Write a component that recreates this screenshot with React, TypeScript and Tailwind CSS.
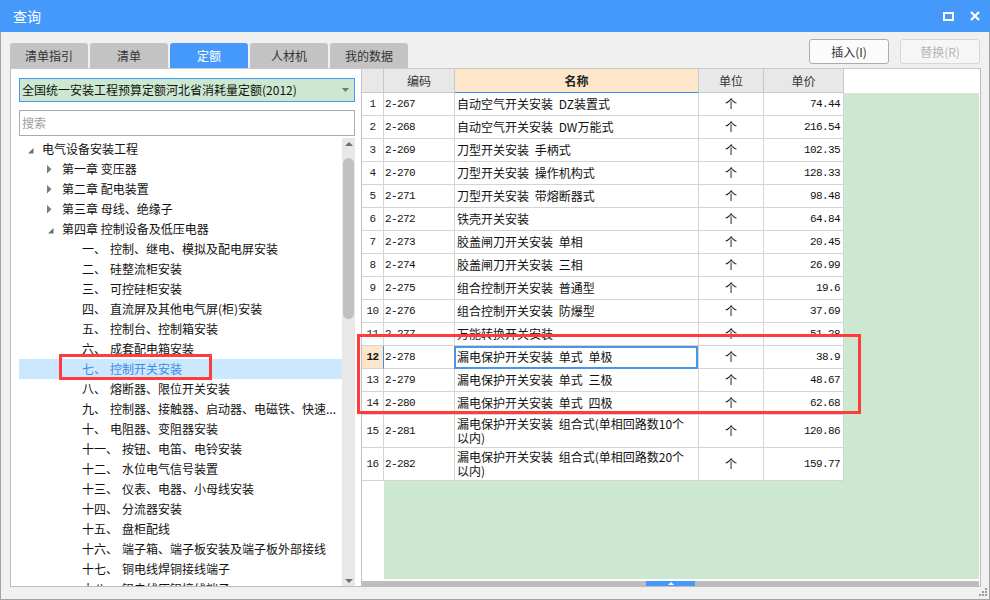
import React from "react";

type TreeRow = { level: number; arrow?: "open" | "closed"; prefix?: string; text: string; selected?: boolean };

const treeRows: TreeRow[] = [
  { level: 0, arrow: "open", text: "电气设备安装工程" },
  { level: 1, arrow: "closed", text: "第一章 变压器" },
  { level: 1, arrow: "closed", text: "第二章 配电装置" },
  { level: 1, arrow: "closed", text: "第三章 母线、绝缘子" },
  { level: 1, arrow: "open", text: "第四章 控制设备及低压电器" },
  { level: 2, prefix: "一、", text: "控制、继电、模拟及配电屏安装" },
  { level: 2, prefix: "二、", text: "硅整流柜安装" },
  { level: 2, prefix: "三、", text: "可控硅柜安装" },
  { level: 2, prefix: "四、", text: "直流屏及其他电气屏(柜)安装" },
  { level: 2, prefix: "五、", text: "控制台、控制箱安装" },
  { level: 2, prefix: "六、", text: "成套配电箱安装" },
  { level: 2, prefix: "七、", text: "控制开关安装", selected: true },
  { level: 2, prefix: "八、", text: "熔断器、限位开关安装" },
  { level: 2, prefix: "九、", text: "控制器、接触器、启动器、电磁铁、快速..." },
  { level: 2, prefix: "十、", text: "电阻器、变阻器安装" },
  { level: 2, prefix: "十一、", text: "按钮、电笛、电铃安装" },
  { level: 2, prefix: "十二、", text: "水位电气信号装置" },
  { level: 2, prefix: "十三、", text: "仪表、电器、小母线安装" },
  { level: 2, prefix: "十四、", text: "分流器安装" },
  { level: 2, prefix: "十五、", text: "盘柜配线" },
  { level: 2, prefix: "十六、", text: "端子箱、端子板安装及端子板外部接线" },
  { level: 2, prefix: "十七、", text: "铜电线焊铜接线端子" },
  { level: 2, prefix: "十八、", text: "铝电线压铝接线端子" },
];

type Row = { n: string; code: string; name: string[]; price: string };
const rows: Row[] = [
  { n: "1", code: "2-267", name: ["自动空气开关安装 DZ装置式"], price: "74.44" },
  { n: "2", code: "2-268", name: ["自动空气开关安装 DW万能式"], price: "216.54" },
  { n: "3", code: "2-269", name: ["刀型开关安装 手柄式"], price: "102.35" },
  { n: "4", code: "2-270", name: ["刀型开关安装 操作机构式"], price: "128.33" },
  { n: "5", code: "2-271", name: ["刀型开关安装 带熔断器式"], price: "98.48" },
  { n: "6", code: "2-272", name: ["铁壳开关安装"], price: "64.84" },
  { n: "7", code: "2-273", name: ["胶盖闸刀开关安装 单相"], price: "20.45" },
  { n: "8", code: "2-274", name: ["胶盖闸刀开关安装 三相"], price: "26.99" },
  { n: "9", code: "2-275", name: ["组合控制开关安装 普通型"], price: "19.6" },
  { n: "10", code: "2-276", name: ["组合控制开关安装 防爆型"], price: "37.69" },
  { n: "11", code: "2-277", name: ["万能转换开关安装"], price: "51.28" },
  { n: "12", code: "2-278", name: ["漏电保护开关安装 单式 单极"], price: "38.9" },
  { n: "13", code: "2-279", name: ["漏电保护开关安装 单式 三极"], price: "48.67" },
  { n: "14", code: "2-280", name: ["漏电保护开关安装 单式 四极"], price: "62.68" },
  { n: "15", code: "2-281", name: ["漏电保护开关安装 组合式(单相回路数10个", "以内)"], price: "120.86" },
  { n: "16", code: "2-282", name: ["漏电保护开关安装 组合式(单相回路数20个", "以内)"], price: "159.77" },
];

const mono = "font-['Liberation_Mono',monospace] text-[11px] tracking-[-0.6px]";

function Arrow({ kind }: { kind: "open" | "closed" }) {
  return (
    <div className="w-[15px] h-[20px] shrink-0">
      <svg width="15" height="20" viewBox="0 0 15 20">
        {kind === "open" ? (
          <polygon points="6.5,9 6.5,14.5 1,14.5" fill="#6f6f6f" />
        ) : (
          <polygon points="0,6 0,14.5 4.5,10.25" fill="#7a7a7a" />
        )}
      </svg>
    </div>
  );
}

function TreeLine({ r }: { r: TreeRow }) {
  const pad = r.level === 0 ? "pl-[8px]" : r.level === 1 ? "pl-[28px]" : "pl-[63px]";
  return (
    <div
      className={`h-[20px] flex items-center whitespace-nowrap overflow-hidden ${pad} ${
        r.selected ? "bg-[#cce8ff] text-[#3a8ce4]" : "text-[#111]"
      }`}
    >
      {r.arrow && <Arrow kind={r.arrow} />}
      {r.prefix && <span className="mr-[4px]">{r.prefix}</span>}
      <span className="leading-[20px]">{r.text}</span>
    </div>
  );
}

function TitleBar() {
  return (
    <div className="h-[32px] shrink-0 bg-[#4599fb] flex items-center pl-[13px] pr-[10px]">
      <span className="text-white text-[14px] leading-none">查询</span>
      <div className="flex-1" />
      <svg width="11" height="9" viewBox="0 0 11 9" className="mr-[16px]">
        <rect x="1" y="1" width="9" height="7" fill="none" stroke="white" strokeWidth="2" />
      </svg>
      <svg width="10" height="10" viewBox="0 0 10 10">
        <path d="M1 1 L9 9 M9 1 L1 9" stroke="white" strokeWidth="2.2" />
      </svg>
    </div>
  );
}

function Toolbar() {
  const tabs = ["清单指引", "清单", "定额", "人材机", "我的数据"];
  return (
    <div className="h-[36px] shrink-0 flex justify-between items-end">
      <div className="flex gap-[2px]">
        {tabs.map((t) => (
          <div
            key={t}
            className={`w-[78px] h-[25px] rounded-t-[3px] flex items-center justify-center text-[12px] ${
              t === "定额" ? "bg-[#4599fb] text-white" : "bg-[#c3c3c3] text-[#333]"
            }`}
          >
            {t}
          </div>
        ))}
      </div>
      <div className="self-start mt-[7px] mr-[1px] flex gap-[11px]">
        <div className="w-[80px] h-[25px] border border-[#adadad] rounded-[3px] bg-[#fbfbfb] flex items-center justify-center text-[12px] text-[#333]">
          插入(I)
        </div>
        <div className="w-[80px] h-[25px] border border-[#d6d6d6] rounded-[3px] bg-[#f6f6f6] flex items-center justify-center text-[12px] text-[#b5b5b5]">
          替换(R)
        </div>
      </div>
    </div>
  );
}

function LeftPane() {
  return (
    <div className="w-[350px] shrink-0 flex flex-col pt-[9px] bg-white">
      <div className="ml-[8px] w-[336px] h-[24px] border border-[#4599fb] bg-[#cde8d1] flex items-center pl-[2px] pr-[5px]">
        <span className="flex-1 text-[12px] text-[#111] whitespace-nowrap">全国统一安装工程预算定额河北省消耗量定额(2012)</span>
        <svg width="7" height="4" viewBox="0 0 7 4">
          <polygon points="0,0 7,0 3.5,4" fill="#777" />
        </svg>
      </div>
      <div className="ml-[8px] mt-[8px] w-[336px] h-[26px] border border-[#ababab] bg-white flex items-center pl-[2px] text-[12px] text-[#a0a0a0]">
        搜索
      </div>
      <div className="mt-[2px] ml-[8px] flex-1 flex min-h-0">
        <div className="w-[323px] pt-[1px] overflow-hidden">
          {treeRows.map((r, i) => (
            <TreeLine key={i} r={r} />
          ))}
        </div>
        <div className="w-[13px] bg-[#e8e8e8] flex flex-col items-center">
          <svg width="8" height="4" viewBox="0 0 8 4" className="mt-[4px]">
            <polygon points="0,4 8,4 4,0" fill="#6e6e6e" />
          </svg>
          <div className="mt-[12px] w-[11px] h-[161px] rounded-full bg-[#c1c1c1]" />
          <div className="flex-1" />
          <svg width="8" height="4" viewBox="0 0 8 4" className="mb-[3px]">
            <polygon points="0,0 8,0 4,4" fill="#6e6e6e" />
          </svg>
        </div>
      </div>
    </div>
  );
}

function RightPane() {
  const hc = "h-full border-r border-b border-[#c9c9c9] bg-[#e8e8e8] flex items-center justify-center text-[12px] text-[#333]";
  return (
    <div className="w-[618px] shrink-0 border-l border-[#c4c4c4] flex flex-col bg-white">
      <div className="h-[24px] flex shrink-0">
        <div className={`w-[22px] ${hc}`} />
        <div className={`w-[71px] ${hc}`}>编码</div>
        <div className="w-[244px] h-full border-r border-b border-r-[#c9c9c9] border-b-[#3c8ef0] bg-[#fde6c9] flex items-center justify-center text-[12px] font-bold text-[#222]">
          名称
        </div>
        <div className={`w-[65px] ${hc}`}>单位</div>
        <div className={`w-[80px] ${hc}`}>单价</div>
        <div className="flex-1 bg-white" />
      </div>
      {rows.map((r) => {
        const sel = r.n === "12";
        const tall = r.name.length > 1;
        return (
          <div key={r.n} className={`flex shrink-0 ${tall ? "h-[33px]" : "h-[23px]"}`}>
            <div
              className={`w-[22px] h-full border-b border-[#d4d4d4] flex items-center justify-center ${mono} ${
                sel ? "bg-[#fde6c9] font-bold text-[#111] border-r border-r-[#3c8ef0]" : "bg-white text-[#222] border-r"
              }`}
            >
              {r.n}
            </div>
            <div className={`w-[71px] h-full border-r border-b border-[#d4d4d4] flex items-center pl-[1px] text-[#111] ${mono}`}>
              {r.code}
            </div>
            <div className="relative w-[244px] h-full border-r border-b border-[#d4d4d4] flex flex-col justify-center pl-[2px] text-[12px] text-[#111] [word-spacing:3px]">
              {r.name.map((l, i) => (
                <div key={i} className={tall ? "leading-[14px]" : "leading-[22px]"}>
                  {l}
                </div>
              ))}
              {sel && <div className="absolute left-[-1px] top-0 right-0 bottom-[-1px] border-2 border-[#4a95ec]" />}
            </div>
            <div className="w-[65px] h-full border-r border-b border-[#d4d4d4] flex items-center justify-center text-[12px] text-[#111]">
              个
            </div>
            <div className={`w-[80px] h-full border-r border-b border-[#d4d4d4] flex items-center justify-end pr-[3px] text-[#111] ${mono}`}>
              {r.price}
            </div>
            <div className="flex-1 bg-[#cde8d1]" />
          </div>
        );
      })}
      <div className="flex-1 flex">
        <div className="w-[22px] bg-white" />
        <div className="flex-1 bg-[#cde8d1]" />
      </div>
      <div className="h-[2px] bg-white shrink-0" />
      <div className="h-[5px] bg-[#bdbdbd] shrink-0 flex">
        <div className="ml-[284px] w-[49px] h-full bg-[#4599fb] flex items-center justify-center">
          <svg width="6" height="3" viewBox="0 0 6 3">
            <polygon points="0,3 6,3 3,0" fill="white" />
          </svg>
        </div>
      </div>
    </div>
  );
}

export default function App() {
  return (
    <div className="relative w-[990px] h-[600px] flex flex-col overflow-hidden font-['Noto_Sans_CJK_SC',sans-serif] text-[12px]">
      <TitleBar />
      <div className="flex-1 flex flex-col bg-[#f0f0f0] border-x border-b border-[#a3a3a3] pl-[9px] pr-[8px] pb-[12px]">
        <Toolbar />
        <div className="h-[519px] shrink-0 flex border border-[#bcbcbc] border-t-[#c8c8c8] bg-white">
          <LeftPane />
          <RightPane />
        </div>
      </div>
      {/* annotation boxes */}
      <div className="absolute left-[59px] top-[354px] w-[153px] h-[26px] border-[3px] border-[#ff3b3b]" />
      <div className="absolute left-[357px] top-[334px] w-[504px] h-[80px] border-[3px] border-[#ff3b3b]" />
      {/* resize grip */}
      <svg width="10" height="10" viewBox="0 0 10 10" className="absolute right-[2px] bottom-[3px]">
        <rect x="7" y="1" width="2" height="2" fill="#9a9a9a" />
        <rect x="4" y="4" width="2" height="2" fill="#9a9a9a" />
        <rect x="7" y="4" width="2" height="2" fill="#9a9a9a" />
        <rect x="1" y="7" width="2" height="2" fill="#9a9a9a" />
        <rect x="4" y="7" width="2" height="2" fill="#9a9a9a" />
        <rect x="7" y="7" width="2" height="2" fill="#9a9a9a" />
      </svg>
    </div>
  );
}
